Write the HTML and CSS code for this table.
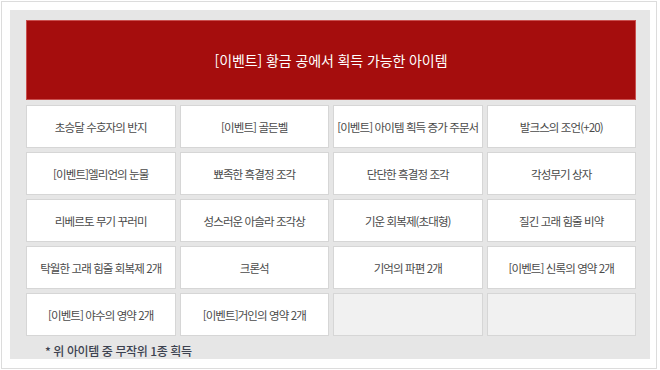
FILE: index.html
```html
<!DOCTYPE html>
<html lang="ko">
<head>
<meta charset="utf-8">
<link rel="stylesheet" href="styles.css">
</head>
<body>
<div class="frame">
  <div class="panel">
    <div class="banner">[이벤트] 황금 공에서 획득 가능한 아이템</div>
    <div class="grid">
      <div class="cell">초승달 수호자의 반지</div>
      <div class="cell">[이벤트] 골든벨</div>
      <div class="cell">[이벤트] 아이템 획득 증가 주문서</div>
      <div class="cell">발크스의 조언(+20)</div>
      <div class="cell">[이벤트]엘리언의 눈물</div>
      <div class="cell">뾰족한 흑결정 조각</div>
      <div class="cell">단단한 흑결정 조각</div>
      <div class="cell">각성무기 상자</div>
      <div class="cell">리베르토 무기 꾸러미</div>
      <div class="cell">성스러운 아슬라 조각상</div>
      <div class="cell">기운 회복제(초대형)</div>
      <div class="cell">질긴 고래 힘줄 비약</div>
      <div class="cell">탁월한 고래 힘줄 회복제 2개</div>
      <div class="cell">크론석</div>
      <div class="cell">기억의 파편 2개</div>
      <div class="cell">[이벤트] 신록의 영약 2개</div>
      <div class="cell">[이벤트] 야수의 영약 2개</div>
      <div class="cell">[이벤트]거인의 영약 2개</div>
      <div class="cell empty"></div>
      <div class="cell empty"></div>
    </div>
    <div class="note">* 위 아이템 중 무작위 1종 획득</div>
  </div>
</div>
</body>
</html>
```
FILE: styles.css
```css
html, body {
  margin: 0;
  padding: 0;
  background: #fff;
}
body {
  font-family: "Noto Sans CJK KR", "Noto Sans", sans-serif;
}
.frame {
  box-sizing: border-box;
  margin: 1px 0 0 1px;
  width: 656px;
  height: 368px;
  border: 1px solid #dcdcdc;
  padding: 8px 0 0 8px;
  background: #fff;
}
.panel {
  box-sizing: border-box;
  width: 640px;
  height: 349px;
  background: #e6e6e6;
  padding: 10px 14px 0 16px;
}
.banner {
  box-sizing: border-box;
  height: 80px;
  background: #a50d0d;
  border: 1px solid #c9504f;
  color: #fff;
  font-size: 14px;
  display: flex;
  align-items: center;
  justify-content: center;
  letter-spacing: -0.1px;
}
.grid {
  margin-top: 5px;
  display: grid;
  grid-template-columns: repeat(4, 1fr);
  grid-auto-rows: 43px;
  gap: 4px;
}
.cell {
  box-sizing: border-box;
  background: #fff;
  border: 1px solid #d6d6d6;
  display: flex;
  align-items: center;
  justify-content: center;
  font-size: 11.5px;
  color: #4a4a4a;
  letter-spacing: -0.9px;
}
.cell.empty {
  background: #f1f1f1;
}
.note {
  margin: 7px 0 0 19px;
  font-size: 12px;
  line-height: 16px;
  font-weight: 500;
  color: #3c4250;
  letter-spacing: -0.4px;
}
```
